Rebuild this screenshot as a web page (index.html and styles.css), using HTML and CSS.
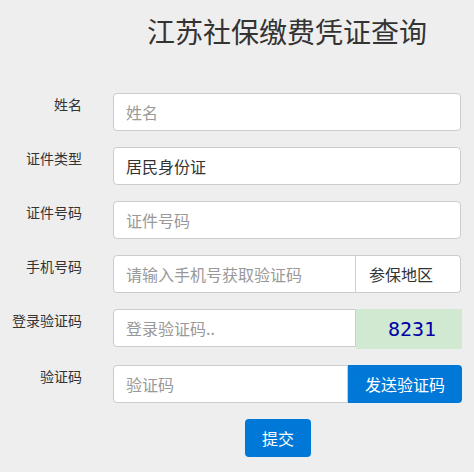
FILE: index.html
```html
<!DOCTYPE html>
<html lang="zh-CN">
<head>
<meta charset="utf-8">
<title>江苏社保缴费凭证查询</title>
<link rel="stylesheet" href="styles.css">
</head>
<body>
<div class="page">
  <h1 class="title">江苏社保缴费凭证查询</h1>
  <form class="form">
    <div class="row">
      <label class="label">姓名</label>
      <div class="field"><input class="input" type="text" placeholder="姓名"></div>
    </div>
    <div class="row">
      <label class="label">证件类型</label>
      <div class="field"><input class="input" type="text" value="居民身份证"></div>
    </div>
    <div class="row">
      <label class="label">证件号码</label>
      <div class="field"><input class="input" type="text" placeholder="证件号码"></div>
    </div>
    <div class="row">
      <label class="label">手机号码</label>
      <div class="field group">
        <input class="input input-left" type="text" placeholder="请输入手机号获取验证码">
        <span class="addon">参保地区</span>
      </div>
    </div>
    <div class="row row-captcha">
      <label class="label">登录验证码</label>
      <div class="field group">
        <input class="input input-left" type="text" placeholder="登录验证码..">
        <span class="captcha">8231</span>
      </div>
    </div>
    <div class="row">
      <label class="label">验证码</label>
      <div class="field group">
        <input class="input input-left" type="text" placeholder="验证码">
        <button type="button" class="send">发送验证码</button>
      </div>
    </div>
    <div class="submit-row">
      <button type="button" class="submit">提交</button>
    </div>
  </form>
</div>
</body>
</html>
```

FILE: styles.css
```css
html, body {
  margin: 0;
  padding: 0;
  background: #eeeeee;
}
body {
  font-family: "Noto Sans CJK SC", "Noto Sans", sans-serif;
  color: #333333;
  width: 474px;
  height: 472px;
  overflow: hidden;
}
.page {
  padding-top: 12px;
}
.title {
  margin: 0 0 0 100px;
  font-size: 28px;
  font-weight: normal;
  line-height: 38px;
  text-align: center;
  color: #333333;
}
.form {
  margin-top: 43px;
}
.row {
  display: grid;
  grid-template-columns: 100px 1fr;
  margin-bottom: 16px;
}
.label {
  padding-right: 18px;
  padding-top: 1px;
  text-align: right;
  font-size: 14px;
  line-height: 20px;
  color: #333333;
}
.field {
  padding: 0 13px;
  display: flex;
}
.input {
  box-sizing: border-box;
  flex: 1;
  min-width: 0;
  height: 38px;
  margin: 0;
  padding: 0 12px;
  border: 1px solid #cccccc;
  border-radius: 4px;
  background: #ffffff;
  font-family: inherit;
  font-size: 16px;
  color: #333333;
  outline: none;
}
.input::placeholder {
  color: #999999;
}
.input-left {
  border-top-right-radius: 0;
  border-bottom-right-radius: 0;
}
.addon {
  box-sizing: border-box;
  width: 105px;
  height: 38px;
  display: flex;
  align-items: center;
  padding-left: 13px;
  border: 1px solid #cccccc;
  border-left: none;
  border-radius: 0 4px 4px 0;
  background: #ffffff;
  font-size: 16px;
  color: #333333;
}
.row-captcha .field {
  padding-right: 12px;
}
.captcha {
  box-sizing: border-box;
  width: 106px;
  height: 40px;
  display: flex;
  align-items: center;
  justify-content: center;
  padding-left: 6px;
  background: #d1e8d1;
  color: #0000a8;
  font-family: "DejaVu Sans Mono", "Liberation Mono", monospace;
  font-size: 20px;
}
.send {
  box-sizing: border-box;
  width: 114px;
  height: 38px;
  margin: 0 -1px 0 0;
  border: none;
  border-radius: 0 4px 4px 0;
  background: #0078d7;
  color: #ffffff;
  font-family: inherit;
  font-size: 16px;
  padding: 0;
}
.submit-row {
  display: flex;
  padding-left: 245px;
}
.submit {
  box-sizing: border-box;
  width: 66px;
  height: 38px;
  border: none;
  border-radius: 4px;
  background: #0078d7;
  color: #ffffff;
  font-family: inherit;
  font-size: 16px;
  padding: 0;
}
```
